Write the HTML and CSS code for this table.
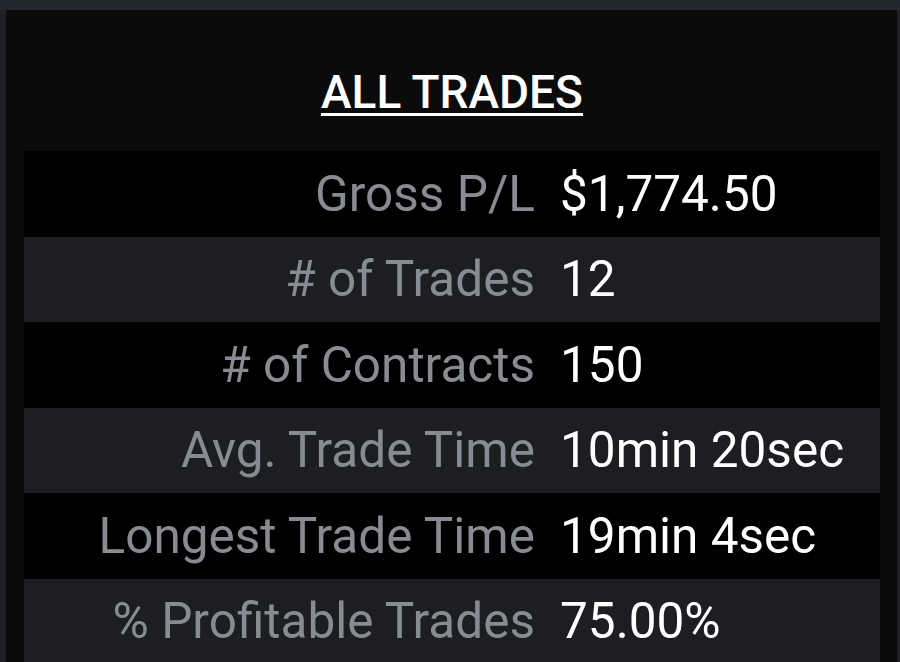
FILE: index.html
```html
<!DOCTYPE html>
<html>
<head>
<meta charset="utf-8">
<link rel="stylesheet" href="styles.css">
</head>
<body>
<div class="topbar"></div>
<div class="wrap">
  <div class="panel">
    <div class="title-area"><h1 class="title">ALL TRADES</h1></div>
    <div class="table">
      <div class="row dark"><div class="label">Gross P/L</div><div class="value">$1,774.50</div></div>
      <div class="row light"><div class="label"># of Trades</div><div class="value">12</div></div>
      <div class="row dark"><div class="label"># of Contracts</div><div class="value">150</div></div>
      <div class="row light"><div class="label">Avg. Trade Time</div><div class="value">10min 20sec</div></div>
      <div class="row dark"><div class="label">Longest Trade Time</div><div class="value">19min 4sec</div></div>
      <div class="row light"><div class="label">% Profitable Trades</div><div class="value">75.00%</div></div>
    </div>
  </div>
</div>
</body>
</html>
```
FILE: styles.css
```css
html, body {
  margin: 0;
  padding: 0;
  background: #1f2025;
  font-family: Roboto, "Noto Sans", sans-serif;
  overflow: hidden;
  height: 662px;
}
.topbar {
  height: 10px;
  background: #24262e;
}
.wrap {
  padding: 0 3px 0 6px;
}
.panel {
  background: #0b0b0c;
  padding: 0 17px 0 18px;
  height: 652px;
}
.title-area {
  height: 141px;
  display: flex;
  align-items: flex-end;
  justify-content: center;
}
.title {
  margin: 0 0 34px 0;
  font-size: 46px;
  font-weight: 500;
  color: #ffffff;
  text-decoration: underline;
  text-underline-offset: 5px;
  text-decoration-thickness: 3px;
  line-height: 50px;
}
.row {
  display: grid;
  grid-template-columns: 511px 1fr;
  column-gap: 25px;
  align-items: center;
  height: 85.5px;
  font-size: 49.5px;
}
.dark { background: #000000; }
.light { background: #1c1e22; }
.label {
  text-align: right;
  color: #888b91;
  white-space: nowrap;
}
.value {
  color: #ffffff;
  white-space: nowrap;
}
```
